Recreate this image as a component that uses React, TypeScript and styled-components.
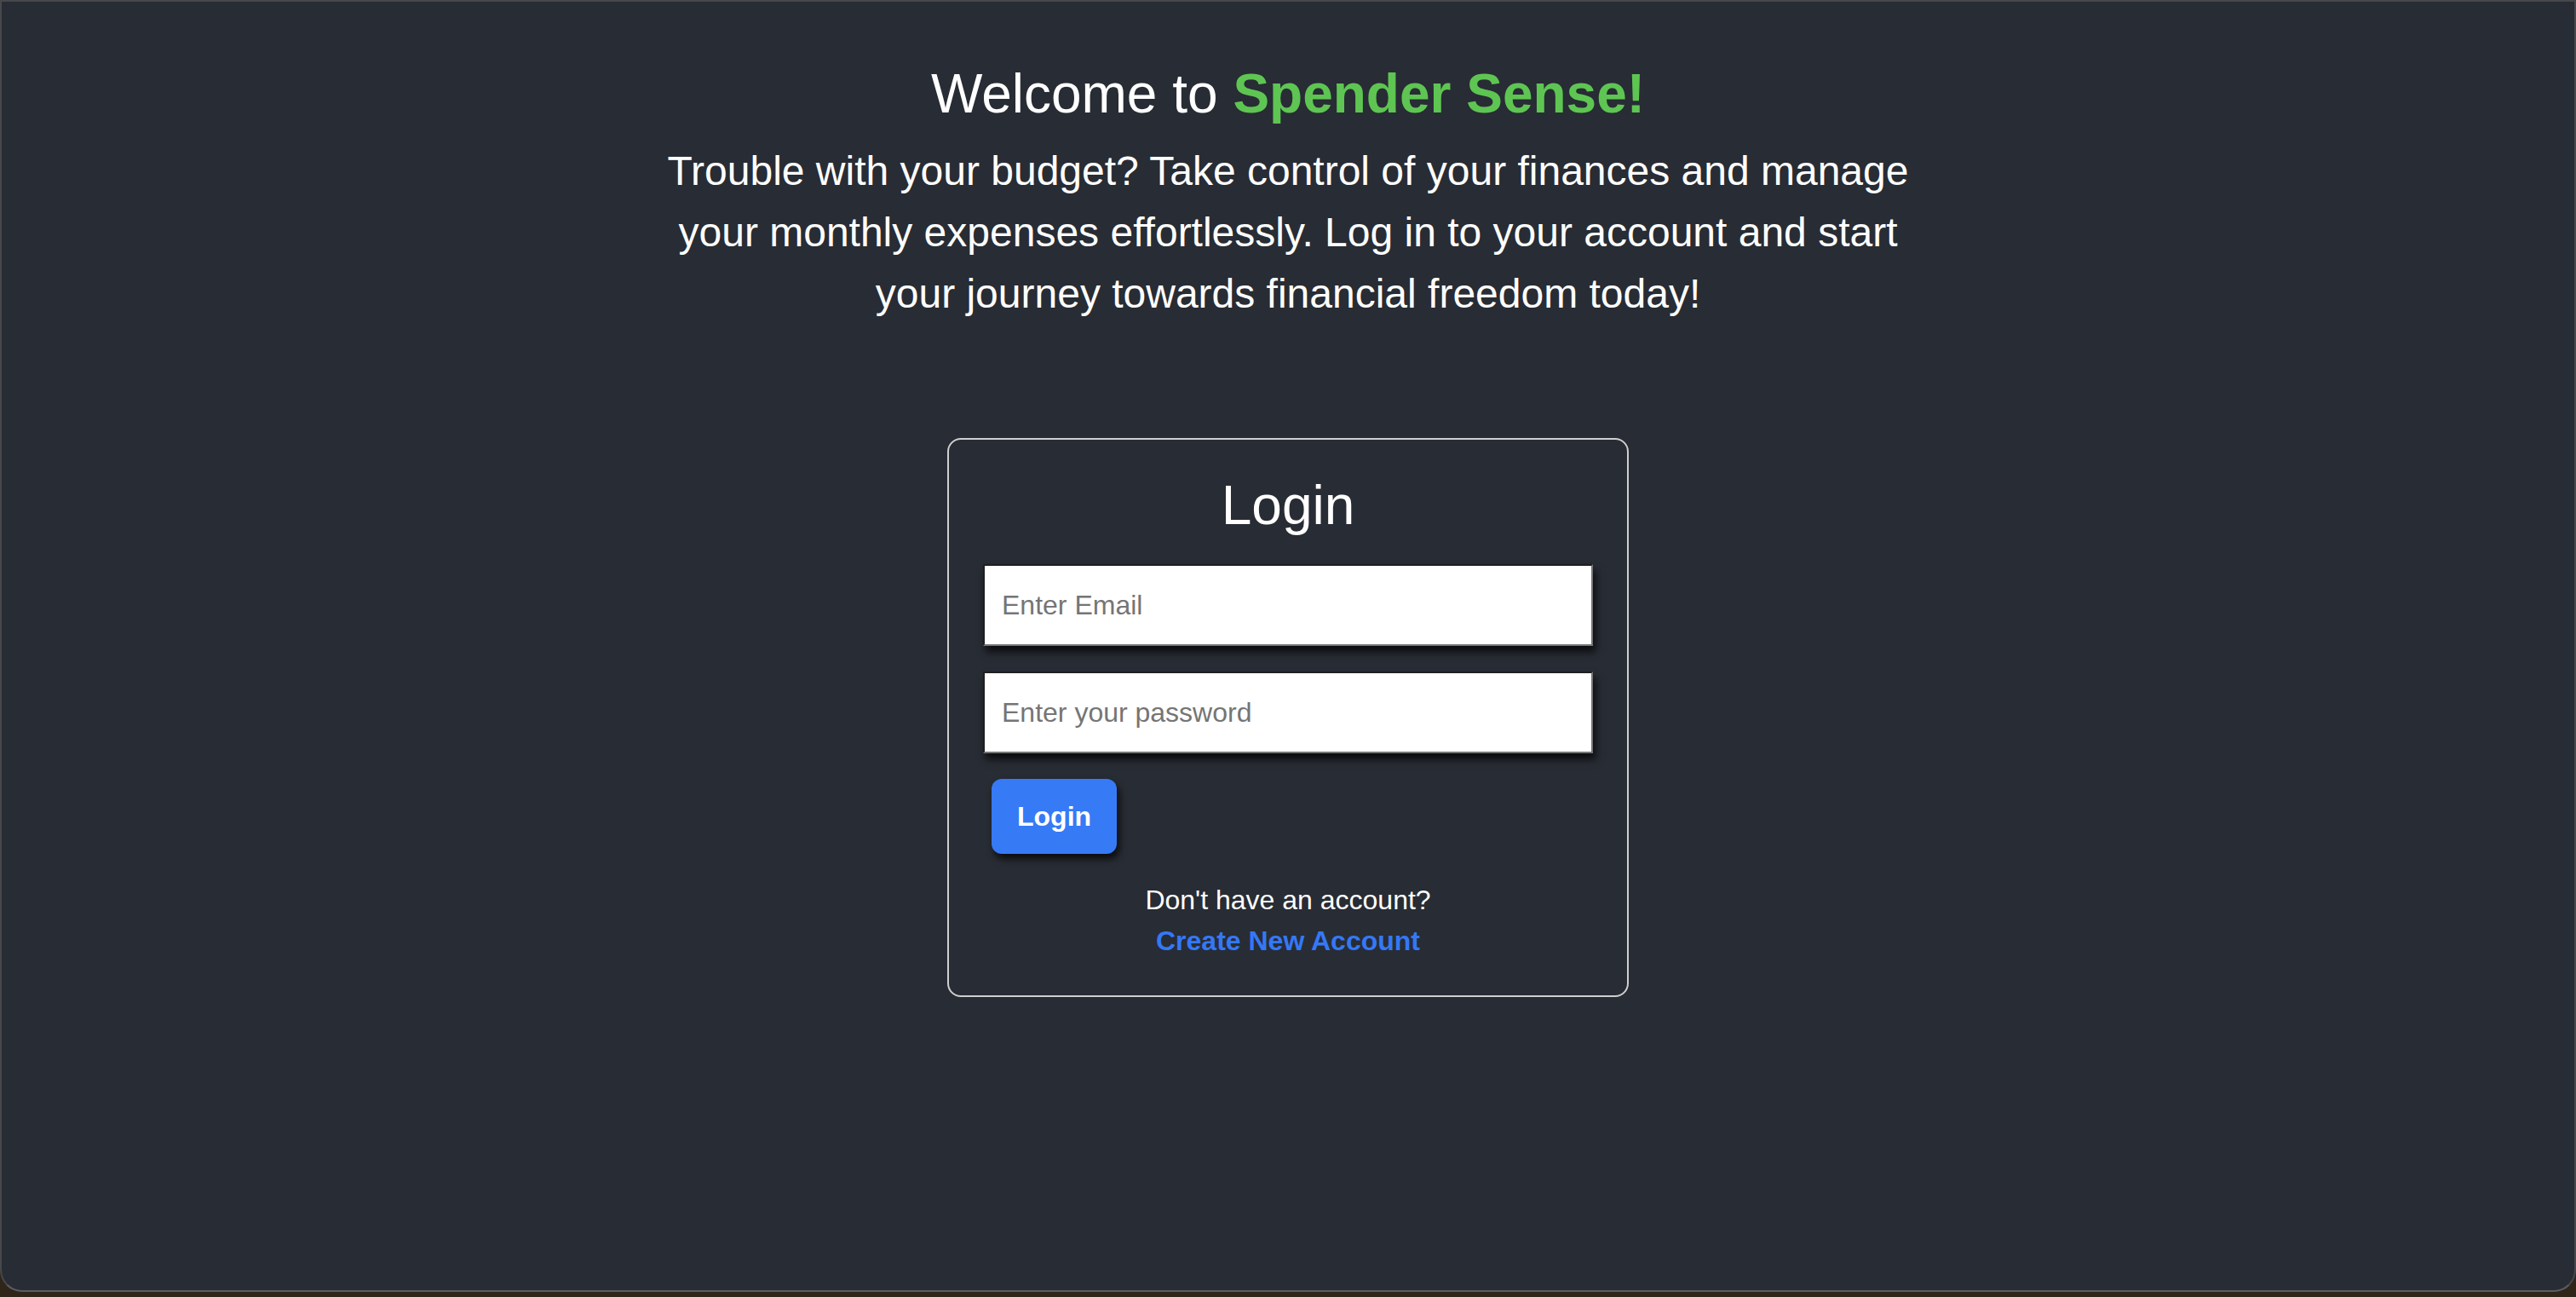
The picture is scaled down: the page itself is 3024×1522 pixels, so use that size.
import React from "react";
import styled, { createGlobalStyle } from "styled-components";

const GlobalStyle = createGlobalStyle`
  html, body {
    margin: 0;
    padding: 0;
    background: #2f2519;
  }
  * { box-sizing: border-box; }
  body {
    font-family: "Liberation Sans", Arial, Helvetica, sans-serif;
  }
`;

const Window = styled.div`
  height: 1516px;
  background: #282c34;
  border: 2px solid #46484c;
  border-bottom-color: #5b5e64;
  border-radius: 0 0 26px 26px;
  display: flex;
  flex-direction: column;
  align-items: center;
  padding-top: 71px;
  color: #ffffff;
  overflow: hidden;
`;

const Title = styled.h1`
  margin: 0;
  font-size: 64px;
  line-height: 74px;
  font-weight: 400;
  text-align: center;
`;

const Brand = styled.span`
  color: #5ec553;
  font-weight: 700;
`;

const Intro = styled.p`
  margin: 18px 0 0;
  max-width: 1500px;
  font-size: 48px;
  line-height: 72px;
  text-align: center;
`;

const Card = styled.form`
  margin-top: 133px;
  width: 800px;
  border: 2px solid #cfcfcf;
  border-radius: 16px;
  padding: 40px 40px 40px;
  display: flex;
  flex-direction: column;
`;

const CardTitle = styled.h2`
  margin: 0 0 32px;
  font-size: 64px;
  line-height: 74px;
  font-weight: 400;
  text-align: center;
`;

const Field = styled.input`
  display: block;
  width: 100%;
  height: 96px;
  margin: 0 0 30px;
  padding: 0 20px;
  font-family: inherit;
  font-size: 32px;
  color: #222;
  background: #ffffff;
  border-style: solid;
  border-width: 2px;
  border-color: #1f1f1f #767676 #767676 #1f1f1f;
  border-radius: 0;
  box-shadow: 3px 7px 9px rgba(0, 0, 0, 0.75);
  outline: none;
  &::placeholder {
    color: #757575;
  }
`;

const SubmitButton = styled.button`
  align-self: flex-start;
  margin-left: 10px;
  height: 88px;
  padding: 0 30px;
  border: none;
  border-radius: 12px;
  background: #367af6;
  color: #ffffff;
  font-family: inherit;
  font-size: 32px;
  font-weight: 700;
  box-shadow: 3px 6px 9px rgba(0, 0, 0, 0.75);
  cursor: pointer;
`;

const Footer = styled.div`
  margin-top: 30px;
  display: flex;
  flex-direction: column;
  align-items: center;
  font-size: 32px;
  line-height: 48px;
`;

const CreateLink = styled.a`
  color: #3478f6;
  font-weight: 700;
  text-decoration: none;
`;

export default function App() {
  return (
    <>
      <GlobalStyle />
      <Window>
        <Title>
          Welcome to <Brand>Spender Sense!</Brand>
        </Title>
        <Intro>
          Trouble with your budget? Take control of your finances and manage
          your monthly expenses effortlessly. Log in to your account and start
          your journey towards financial freedom today!
        </Intro>
        <Card onSubmit={(e) => e.preventDefault()}>
          <CardTitle>Login</CardTitle>
          <Field type="email" placeholder="Enter Email" />
          <Field type="password" placeholder="Enter your password" />
          <SubmitButton type="submit">Login</SubmitButton>
          <Footer>
            <span>Don't have an account?</span>
            <CreateLink href="#">Create New Account</CreateLink>
          </Footer>
        </Card>
      </Window>
    </>
  );
}
